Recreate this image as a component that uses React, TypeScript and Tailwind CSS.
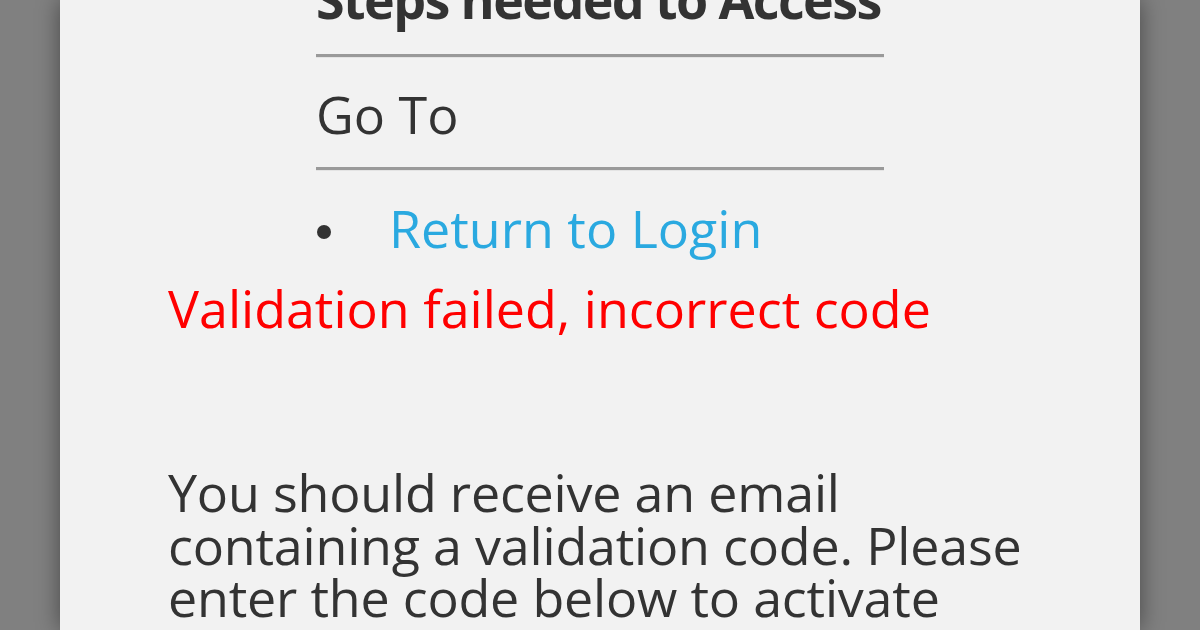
export default function App() {
  const font = { fontFamily: '"Open Sans", "Noto Sans", sans-serif' }
  return (
    <div className="w-[1200px] h-[630px] overflow-hidden bg-[#808080] flex justify-center" style={font}>
      <div className="w-[1080px] h-full bg-[#f2f2f2] shadow-[0_0_22px_rgba(0,0,0,0.45)] px-[108px] text-[#333333]">
        {/* Top block */}
        <div className="w-[568px] mx-auto">
          <h2 className="text-[52px] leading-[53px] font-bold tracking-[-1.6px] mt-[-28px] whitespace-nowrap">Steps needed to Access</h2>
          <div className="mt-[29px] h-[4px] border-t-[3px] border-[#9a9a9a] border-b border-b-[#e4e4e4]" />
          <p className="mt-[29px] text-[52px] leading-[53px]">Go To</p>
          <div className="mt-[27px] h-[4px] border-t-[3px] border-[#9a9a9a] border-b border-b-[#e4e4e4]" />
          <ul className="mt-[30px]">
            <li className="flex items-start text-[52px] leading-[53px]">
              <span className="w-[14px] h-[14px] rounded-full bg-[#333333] mt-[24px] ml-[1px] mr-[58px] shrink-0" />
              <a className="text-[#2aa9e0]">Return to Login</a>
            </li>
          </ul>
        </div>

        <p className="mt-[27px] text-[52px] leading-[53px] text-[#ff0000]">Validation failed, incorrect code</p>

        <p className="mt-[132px] text-[52px] leading-[52.5px] tracking-[-0.2px]">
          You should receive an email
          <br />
          containing a validation code. Please
          <br />
          enter the code below to activate
        </p>
      </div>
    </div>
  )
}
